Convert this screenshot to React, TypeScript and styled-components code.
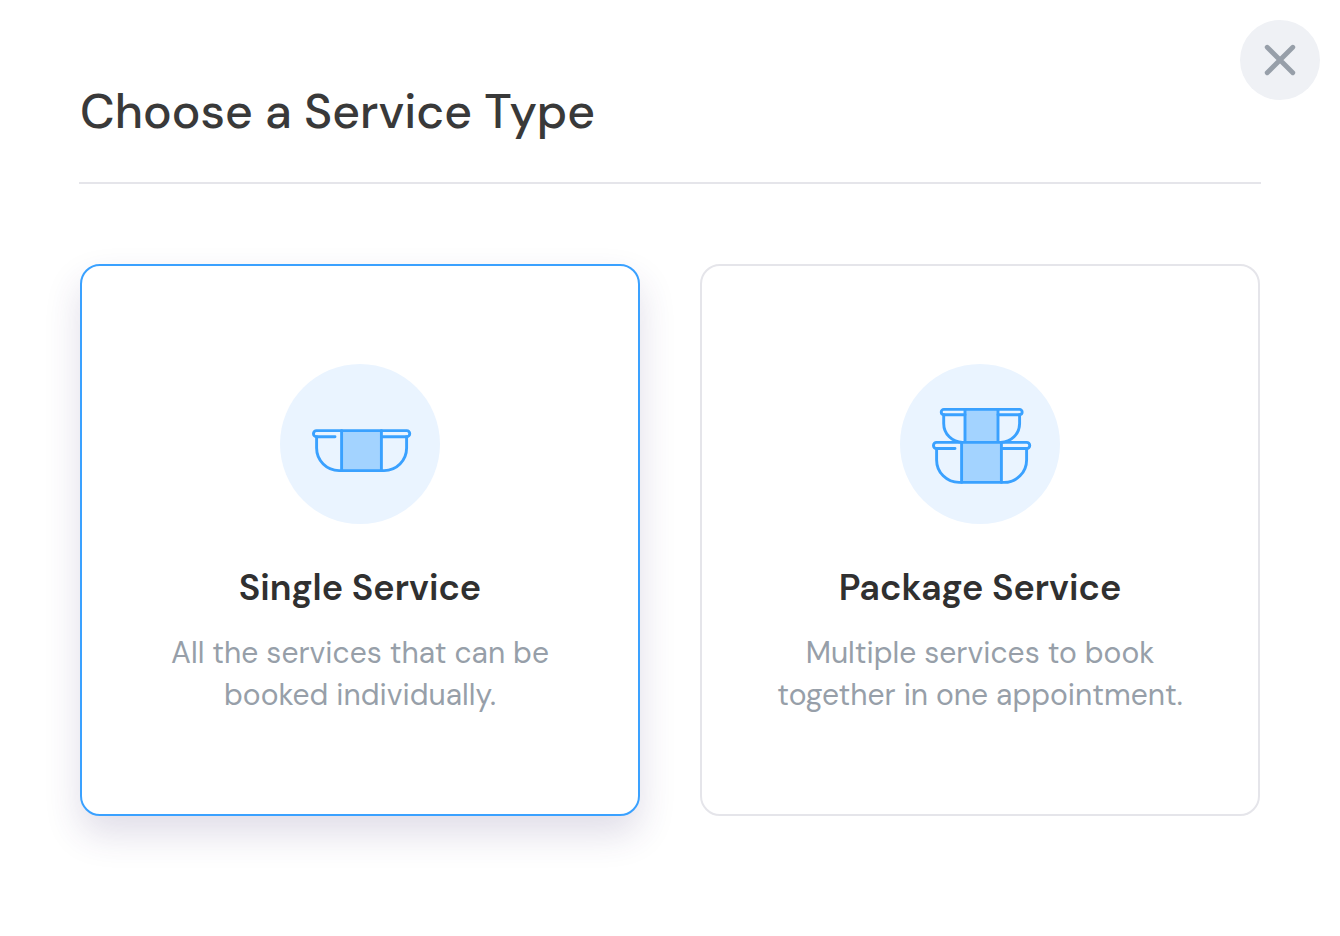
import React, { useState } from "react";
import styled, { createGlobalStyle } from "styled-components";

const GlobalStyle = createGlobalStyle`
  *, *::before, *::after { box-sizing: border-box; }
  body {
    margin: 0;
    background: #fff;
    color: #393939;
    font-family: "DM Sans", Inter, "Liberation Sans", sans-serif;
  }
`;

const Dialog = styled.main`
  position: relative;
  padding: 80px;
`;

const CloseButton = styled.button`
  position: absolute;
  top: 20px;
  right: 20px;
  display: grid;
  place-items: center;
  width: 80px;
  height: 80px;
  padding: 0;
  border: 0;
  border-radius: 50%;
  background: #eff1f5;
  color: #979fa9;
  cursor: pointer;
`;

const Header = styled.header`
  margin: 0 -1px 80px;
  padding: 0 1px 38px;
  border-bottom: 2px solid #e5e5ea;
`;

const Title = styled.h1`
  margin: 0;
  font-size: 48px;
  font-weight: 500;
  line-height: 64px;
`;

const Options = styled.div`
  display: grid;
  grid-template-columns: repeat(2, minmax(0, 1fr));
  gap: 60px;
`;

const OptionCard = styled.button<{ $selected: boolean }>`
  display: flex;
  flex-direction: column;
  align-items: center;
  padding: 98px 64px;
  border: 2px solid ${(p) => (p.$selected ? "#3aa1ff" : "#e5e5ea")};
  border-radius: 20px;
  background: #fff;
  box-shadow: ${(p) => (p.$selected ? "0 18px 36px rgba(60, 45, 115, 0.16)" : "none")};
  font-family: inherit;
  text-align: center;
  cursor: pointer;
`;

const IconCircle = styled.span`
  width: 160px;
  height: 160px;
  margin-bottom: 40px;
  border-radius: 50%;
  background: #eaf4ff;

  svg { display: block; }
`;

const OptionTitle = styled.span`
  margin-bottom: 20px;
  color: #303030;
  font-size: 36px;
  font-weight: 600;
  line-height: 48px;
`;

const OptionText = styled.span`
  max-width: 420px;
  color: #979fa9;
  font-size: 30px;
  font-weight: 400;
  line-height: 42px;
`;

function Bowl() {
  return (
    <>
      <path d="M61.6 66.6h39.8v40H61.6z" fill="#a3d3ff" stroke="none" />
      <path d="M55 72.7H36.5a3.05 3.05 0 0 1 0-6.1h90.2a3.05 3.05 0 0 1 0 6.1h-25.3" />
      <path d="M36.6 72.7v11.4a22.5 22.5 0 0 0 22.5 22.5h45a22.5 22.5 0 0 0 22.5-22.5V72.7" />
      <path d="M61.6 66.6v40M101.4 66.6v40" />
    </>
  );
}

function IconCanvas({ children }: { children: React.ReactNode }) {
  return (
    <svg
      width="160"
      height="160"
      viewBox="0 0 160 160"
      fill="none"
      stroke="#3aa1ff"
      strokeWidth="2.9"
      strokeLinecap="round"
      strokeLinejoin="round"
      aria-hidden="true"
    >
      {children}
    </svg>
  );
}

function SingleIcon() {
  return (
    <IconCanvas>
      <Bowl />
    </IconCanvas>
  );
}

function PackageIcon() {
  return (
    <IconCanvas>
      <path d="M65 45.4h33v33H65z" fill="#a3d3ff" stroke="none" />
      <path d="M65 50.7H43.9a2.65 2.65 0 0 1 0-5.3h75.6a2.65 2.65 0 0 1 0 5.3H98" />
      <path d="M43.7 50.7v8.7a19 19 0 0 0 19 19h37.9a19 19 0 0 0 19-19v-8.7" />
      <path d="M65 45.4v33M98 45.4v33" />
      <g transform="translate(0 11.8)">
        <Bowl />
      </g>
    </IconCanvas>
  );
}

const options = [
  {
    id: "single",
    title: "Single Service",
    text: "All the services that can be booked individually.",
    Icon: SingleIcon,
  },
  {
    id: "package",
    title: "Package Service",
    text: "Multiple services to book together in one appointment.",
    Icon: PackageIcon,
  },
];

export default function App() {
  const [selected, setSelected] = useState("single");

  return (
    <>
      <GlobalStyle />
      <Dialog>
        <Header>
          <Title>Choose a Service Type</Title>
        </Header>
        <CloseButton type="button" aria-label="Close">
          <svg width="32" height="32" viewBox="0 0 32 32" fill="none" stroke="currentColor" strokeWidth="4.8" strokeLinecap="round" aria-hidden="true">
            <path d="M3.2 3.2l25.6 25.6M28.8 3.2L3.2 28.8" />
          </svg>
        </CloseButton>
        <Options>
          {options.map(({ id, title, text, Icon }) => (
            <OptionCard
              key={id}
              type="button"
              $selected={selected === id}
              aria-pressed={selected === id}
              onClick={() => setSelected(id)}
            >
              <IconCircle>
                <Icon />
              </IconCircle>
              <OptionTitle>{title}</OptionTitle>
              <OptionText>{text}</OptionText>
            </OptionCard>
          ))}
        </Options>
      </Dialog>
    </>
  );
}
